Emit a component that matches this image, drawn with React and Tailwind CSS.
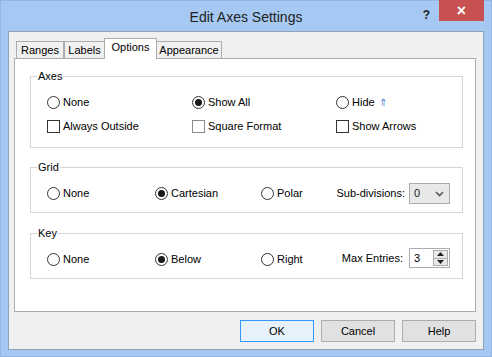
const font = { fontFamily: '"Liberation Sans", Arial, sans-serif' };

const Radio = ({ checked }) => (
  <span className="w-[13px] h-[13px] rounded-full border border-[#333333] bg-white flex items-center justify-center shrink-0">
    {checked && <span className="w-[7px] h-[7px] rounded-full bg-[#1a1a1a]" />}
  </span>
);

const Check = ({ light }) => (
  <span className={`w-[13px] h-[13px] border bg-white shrink-0 ${light ? 'border-[#8a8a8a]' : 'border-[#333333]'}`} />
);

const Opt = ({ label, checked, box, light, extra }) => (
  <label className="flex items-center gap-[3px] h-[14px] whitespace-nowrap">
    {box ? <Check light={light} /> : <Radio checked={checked} />}
    <span>{label}</span>
    {extra}
  </label>
);

const Group = ({ title, className, children }) => (
  <fieldset className={`ml-[15px] w-[433px] border border-[#d5d5d5] ${className}`}>
    <legend className="ml-[6px] px-[1px] leading-[16px]">{title}</legend>
    {children}
  </fieldset>
);

const tabs = [
  { name: 'Ranges', w: 'w-[48px]' },
  { name: 'Labels', w: 'w-[41px]' },
  { name: 'Options', w: 'w-[53px]', active: true },
  { name: 'Appearance', w: 'w-[66px]' },
];

export default function App() {
  return (
    <div className="w-[492px] h-[357px] bg-[#a5c9f3] border border-[#93b7e2] flex flex-col text-[11px] text-black" style={font}>
      <div className="relative h-[30px] flex items-center justify-center shrink-0">
        <span className="text-[14px] text-[#222222] mt-[2px]">Edit Axes Settings</span>
        <span className="absolute right-[61px] top-[5px] text-[12px] font-bold text-[#222222]">?</span>
        <div className="absolute right-[7px] top-[-1px] w-[45px] h-[21px] bg-[#c75050] flex items-center justify-center text-white text-[16px] leading-none font-bold">
          ×
        </div>
      </div>

      <div className="mx-[7px] h-[319px] bg-[#f0f0f0] border border-[#8fa2b8] flex flex-col pl-[5px]">
        <div className="flex items-end h-[20px] mt-[6px] ml-[2px]">
          {tabs.map((t) =>
            t.active ? (
              <div
                key={t.name}
                className={`${t.w} h-[21px] -mb-[1px] -mx-[1px] relative z-10 bg-white border border-b-0 border-[#acacac] flex items-center justify-center pb-[3px]`}
              >
                {t.name}
              </div>
            ) : (
              <div
                key={t.name}
                className={`${t.w} h-[17px] bg-[#f0f0f0] border border-b-0 border-[#acacac] flex items-center justify-center`}
              >
                {t.name}
              </div>
            )
          )}
        </div>

        <div className="w-[462px] h-[254px] bg-white border border-[#acacac] flex flex-col">
          <Group title="Axes" className="mt-[9px] h-[80px]">
            <div className="pl-[16px] pt-[11px] grid grid-cols-[145px_144px_auto] gap-y-[10px]">
              <Opt label="None" />
              <Opt label="Show All" checked />
              <Opt label="Hide" extra={<span className="ml-[1px] text-[10px] text-[#4a7cc9]">⇑</span>} />
              <Opt label="Always Outside" box />
              <Opt label="Square Format" box light />
              <Opt label="Show Arrows" box />
            </div>
          </Group>

          <Group title="Grid" className="mt-[11px] h-[54px]">
            <div className="pl-[16px] pr-[12px] pt-[8px] flex items-center">
              <div className="w-[108px]"><Opt label="None" /></div>
              <div className="w-[106px]"><Opt label="Cartesian" checked /></div>
              <Opt label="Polar" />
              <div className="ml-auto flex items-center gap-[4px]">
                <span>Sub-divisions:</span>
                <div className="w-[41px] h-[21px] border border-[#acacac] bg-[#e8e8e8] flex items-center justify-between pl-[4px] pr-[5px]">
                  <span className="text-[#1a1a1a]">0</span>
                  <svg width="9" height="6" viewBox="0 0 9 6">
                    <path d="M1 1 L4.5 4.5 L8 1" fill="none" stroke="#5a5a5a" strokeWidth="1.6" />
                  </svg>
                </div>
              </div>
            </div>
          </Group>

          <Group title="Key" className="mt-[12px] h-[54px]">
            <div className="pl-[16px] pr-[12px] pt-[10px] flex items-center">
              <div className="w-[108px]"><Opt label="None" /></div>
              <div className="w-[106px]"><Opt label="Below" checked /></div>
              <Opt label="Right" />
              <div className="ml-auto flex items-center gap-[6px] -mt-[3px]">
                <span>Max Entries:</span>
                <div className="w-[41px] h-[20px] border border-[#abadb3] bg-white flex items-center pl-[4px] pr-[1px]">
                  <span className="flex-1">3</span>
                  <div className="w-[15px] h-[16px] flex flex-col border border-[#acacac]">
                    <div className="flex-1 bg-[#e8e8e8] border-b border-[#acacac] flex items-center justify-center">
                      <svg width="7" height="4" viewBox="0 0 7 4"><path d="M0 4 L3.5 0 L7 4 Z" fill="#222222" /></svg>
                    </div>
                    <div className="flex-1 bg-[#e8e8e8] flex items-center justify-center">
                      <svg width="7" height="4" viewBox="0 0 7 4"><path d="M0 0 L3.5 4 L7 0 Z" fill="#222222" /></svg>
                    </div>
                  </div>
                </div>
              </div>
            </div>
          </Group>
        </div>

        <div className="flex justify-end gap-[7px] mt-[8px] pr-[7px]">
          <button className="w-[74px] h-[22px] border border-[#3399ff] bg-[#e5f1fb]">OK</button>
          <button className="w-[74px] h-[22px] border border-[#adadad] bg-[#e1e1e1]">Cancel</button>
          <button className="w-[74px] h-[22px] border border-[#adadad] bg-[#e1e1e1]">Help</button>
        </div>
      </div>
    </div>
  );
}
